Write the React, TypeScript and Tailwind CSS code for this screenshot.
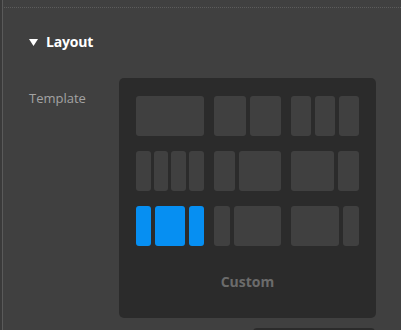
import React from 'react';

type Tile = number[];

const rows: Tile[][] = [
  [[1], [1, 1], [1, 1, 1]],
  [[1, 1, 1, 1], [1, 2], [2, 1]],
  [[1, 2, 1], [1, 3], [3, 1]],
];

export default function App() {
  return (
    <div
      className="w-[401px] h-[330px] overflow-hidden bg-[#404040] flex"
      style={{ fontFamily: '"Open Sans", "Noto Sans", sans-serif' }}
    >
      <div className="w-[2px] bg-[#3a3a3a]" />
      <div className="w-px bg-[#5a5a5a]" />
      <div className="flex-1 flex flex-col">
        <div className="mt-[7px] ml-[1px] border-t border-dotted border-[#5c5c5c]" />

        {/* Section header */}
        <div className="flex items-center gap-[8px] pl-[26px] mt-[27px] h-[16px]">
          <svg width="9" height="7" viewBox="0 0 9 7">
            <polygon points="0,0 9,0 4.5,7" fill="#ffffff" />
          </svg>
          <span className="text-[14px] font-bold text-white leading-none tracking-[-0.2px]">Layout</span>
        </div>

        <div className="flex mt-[29px] pl-[26px]">
          <div className="w-[90px] pt-[14px] text-[13px] text-[#a3a3a3] leading-none">Template</div>

          <div className="flex flex-col">
            <div className="w-[257px] h-[240px] rounded-[5px] bg-[#2b2b2b] pt-[18px] px-[17px] flex flex-col">
              <div className="flex flex-col gap-[15px]">
                {rows.map((row, ri) => (
                  <div key={ri} className="grid grid-cols-3 gap-[10px] h-[40px]">
                    {row.map((group, gi) => {
                      const selected = ri === 2 && gi === 0;
                      return (
                        <div key={gi} className={`flex ${group.length === 4 ? 'gap-[3px]' : 'gap-[4px]'}`}>
                          {group.map((g, ti) => (
                            <div
                              key={ti}
                              className={`rounded-[3px] ${selected ? 'bg-[#068ff2]' : 'bg-[#404040]'}`}
                              style={{ flexGrow: g, flexBasis: 0 }}
                            />
                          ))}
                        </div>
                      );
                    })}
                  </div>
                ))}
              </div>
              <div className="mt-[29px] text-center text-[14px] font-bold text-[#6b6b6b] leading-none">Custom</div>
            </div>
            <div className="ml-[134px] mt-[10px] w-[122px] h-[20px] rounded-t-[4px] bg-[#2b2b2b]" />
          </div>
        </div>
      </div>
    </div>
  );
}
